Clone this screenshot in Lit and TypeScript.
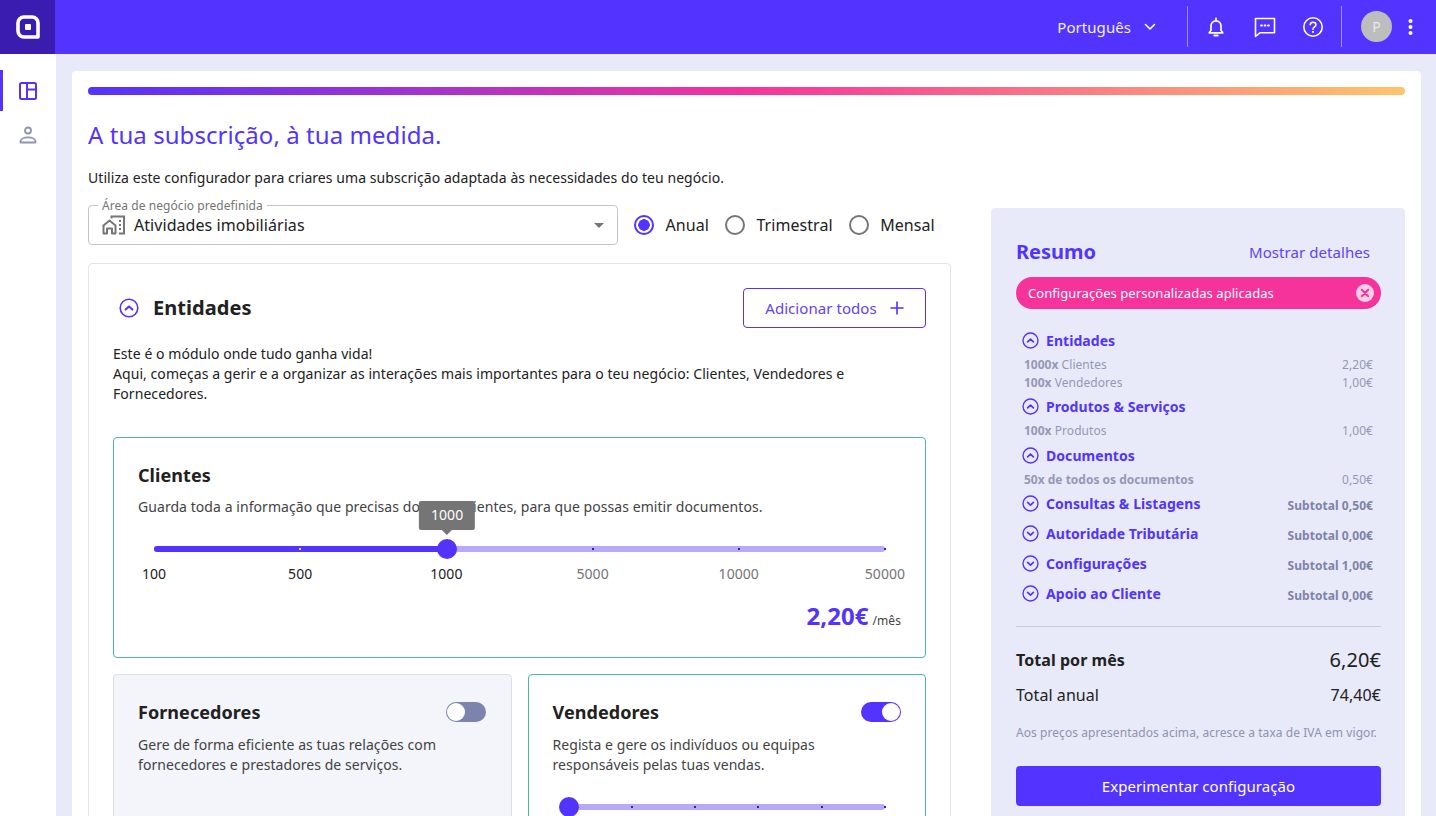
import { LitElement, html, css, svg } from "lit";
import { customElement } from "lit/decorators.js";

const chevronCircle = (up: boolean, size = 20) => html`<svg class="chev" width=${size} height=${size} viewBox="0 0 20 20" fill="none" stroke="currentColor">
  <circle cx="10" cy="10" r="8.8" stroke-width="1.6"></circle>
  ${up
    ? svg`<path d="M6.6 11.6 10 8.4l3.4 3.2" stroke-width="2" stroke-linecap="round" stroke-linejoin="round"></path>`
    : svg`<path d="M6.6 8.6 10 11.8l3.4-3.2" stroke-width="2" stroke-linecap="round" stroke-linejoin="round"></path>`}
</svg>`;

interface SummaryLine {
  qty: string;
  label: string;
  price: string;
}

interface SummaryGroup {
  name: string;
  open: boolean;
  subtotal?: string;
  lines?: SummaryLine[];
}

const groups: SummaryGroup[] = [
  {
    name: "Entidades",
    open: true,
    lines: [
      { qty: "1000x", label: " Clientes", price: "2,20€" },
      { qty: "100x", label: " Vendedores", price: "1,00€" },
    ],
  },
  {
    name: "Produtos & Serviços",
    open: true,
    lines: [{ qty: "100x", label: " Produtos", price: "1,00€" }],
  },
  {
    name: "Documentos",
    open: true,
    lines: [{ qty: "50x de todos os documentos", label: "", price: "0,50€" }],
  },
  { name: "Consultas & Listagens", open: false, subtotal: "Subtotal 0,50€" },
  { name: "Autoridade Tributária", open: false, subtotal: "Subtotal 0,00€" },
  { name: "Configurações", open: false, subtotal: "Subtotal 1,00€" },
  { name: "Apoio ao Cliente", open: false, subtotal: "Subtotal 0,00€" },
];

@customElement("app-root")
export class AppRoot extends LitElement {
  static styles = css`
    :host {
      display: block;
      height: 816px;
      overflow: hidden;
      background: #e8eaf9;
      font-family: "Noto Sans", sans-serif;
      letter-spacing: 0.06px;
      color: #212121;
    }
    * {
      box-sizing: border-box;
    }
    .topbar {
      height: 54px;
      background: #5233ff;
      display: flex;
      align-items: center;
      color: #fff;
    }
    .logo {
      width: 55px;
      height: 54px;
      background: #3a1db0;
      display: flex;
      align-items: center;
      justify-content: center;
    }
    .top-right {
      margin-left: auto;
      display: flex;
      align-items: center;
      height: 100%;
      padding-bottom: 1px;
    }
    .lang {
      font-size: 15px;
      display: flex;
      align-items: center;
      gap: 13px;
      margin-right: 31px;
      color: #f1efff;
    }
    .sep {
      width: 1px;
      height: 41px;
      background: rgba(255, 255, 255, 0.45);
    }
    .icons {
      display: flex;
      align-items: center;
      gap: 24.5px;
      padding: 0 17px;
    }
    .avatar {
      width: 31px;
      height: 31px;
      border-radius: 50%;
      background: #bdbdbd;
      color: #e8e8e8;
      font-size: 14px;
      display: flex;
      align-items: center;
      justify-content: center;
      margin-left: 19px;
    }
    .dots {
      margin: 0 23px 0 16px;
      display: flex;
    }
    .body {
      display: flex;
      height: 762px;
    }
    .side {
      width: 56px;
      background: #fff;
      padding-top: 16px;
      display: flex;
      flex-direction: column;
      flex: none;
    }
    .side-item {
      height: 41px;
      display: flex;
      align-items: center;
      justify-content: center;
      border-left: 3px solid transparent;
      padding-right: 4px;
    }
    .side-item.active {
      border-left-color: #5233ff;
    }
    .side-item + .side-item {
      height: 48px;
    }
    .main {
      flex: 1;
      padding: 17px 15px 0 16px;
      min-width: 0;
    }
    .card {
      background: #fff;
      border-radius: 4px 4px 0 0;
      padding: 16px;
      height: 800px;
    }
    .gradient {
      height: 8px;
      border-radius: 4px;
      background: linear-gradient(90deg, #5233ff 0%, #f5339b 50%, #ffc46b 100%);
    }
    h1 {
      margin: 24px 0 0;
      font-size: 24px;
      line-height: 32px;
      font-weight: 400;
      color: #5233ff;
    }
    .intro {
      margin: 17px 0 0;
      font-size: 14px;
      line-height: 20px;
    }
    .columns {
      display: grid;
      grid-template-columns: 863px 414px;
      gap: 40px;
      margin-top: 17px;
      align-items: start;
    }
    .controls {
      display: flex;
      align-items: center;
    }
    .select {
      position: relative;
      width: 530px;
      height: 40px;
      border: 1px solid #c4c4c4;
      border-radius: 4px;
      display: flex;
      align-items: center;
      padding: 0 14px;
      font-size: 16px;
      gap: 8px;
    }
    .legend {
      position: absolute;
      top: -8px;
      left: 9px;
      background: #fff;
      padding: 0 4px;
      font-size: 12px;
      line-height: 16px;
      color: #757575;
    }
    .arrow {
      margin-left: auto;
      width: 0;
      height: 0;
      margin-right: -1px;
      border-left: 5px solid transparent;
      border-right: 5px solid transparent;
      border-top: 5px solid #757575;
    }
    .radios {
      display: flex;
      align-items: center;
      margin-left: 16px;
      font-size: 16px;
      gap: 16px;
    }
    .radio {
      display: flex;
      align-items: center;
      gap: 11.5px;
    }
    .dot {
      width: 20px;
      height: 20px;
      border-radius: 50%;
      border: 2px solid #757575;
      flex: none;
    }
    .dot.on {
      border-color: #5233ff;
      background: radial-gradient(circle, #5233ff 0 5.5px, transparent 6px);
    }
    .module {
      margin-top: 18px;
      border: 1px solid #e4e5ec;
      border-radius: 4px;
      padding: 24px;
    }
    .mod-head {
      display: flex;
      align-items: center;
      height: 40px;
    }
    .mod-head .chev {
      color: #5233ff;
      margin-left: 6px;
    }
    .mod-head h2 {
      margin: 0 0 0 14px;
      padding-bottom: 2px;
      font-size: 20px;
      font-weight: 700;
    }
    .add {
      margin-left: auto;
      width: 183px;
      height: 40px;
      border: 1px solid #5233ff;
      border-radius: 4px;
      color: #5f43f5;
      font-size: 15px;
      display: flex;
      align-items: center;
      justify-content: center;
      gap: 13px;
    }
    .mod-text {
      margin: 16px 0 0;
      font-size: 14px;
      line-height: 20px;
    }
    .pick {
      margin-top: 33px;
      border: 1px solid #4db89c;
      border-radius: 4px;
      padding: 23px 24px 24px;
    }
    .pick h3 {
      margin: 0;
      font-size: 18px;
      line-height: 28px;
      font-weight: 700;
    }
    .pick p {
      margin: 8px 0 0;
      font-size: 14px;
      line-height: 20px;
      color: #424242;
    }
    .slider {
      position: relative;
      height: 6px;
      margin: 29px 16px 0;
      border-radius: 3px;
      background: #b9a9fb;
    }
    .fill {
      position: absolute;
      left: 0;
      top: 0;
      bottom: 0;
      border-radius: 3px;
      background: #5233ff;
    }
    .tick {
      position: absolute;
      top: 2px;
      width: 2px;
      height: 2px;
      margin-left: -1px;
      background: #3a1db0;
    }
    .tick.in {
      background: #dcd6ff;
    }
    .thumb {
      position: absolute;
      top: -7px;
      width: 20px;
      height: 20px;
      margin-left: -10px;
      border-radius: 50%;
      background: #5233ff;
    }
    .tip {
      position: absolute;
      top: -38px;
      left: 50%;
      transform: translateX(-50%);
      background: #757575;
      color: #fff;
      font-size: 14px;
      line-height: 20px;
      padding: 4px 12px;
      border-radius: 2px;
      height: 29px;
    }
    .tip::after {
      content: "";
      position: absolute;
      left: 50%;
      margin-left: -5px;
      bottom: -5px;
      border-left: 5px solid transparent;
      border-right: 5px solid transparent;
      border-top: 5px solid #757575;
    }
    .marks {
      display: flex;
      justify-content: space-between;
      margin: 12px 16px 0;
      font-size: 14px;
      line-height: 20px;
      color: #757575;
    }
    .marks span {
      width: 0;
      display: flex;
      justify-content: center;
      white-space: nowrap;
    }
    .marks .reached {
      color: #212121;
    }
    .price {
      margin: 16px 0 -4px;
      display: flex;
      justify-content: flex-end;
      align-items: baseline;
      gap: 4px;
      color: #5233ff;
      font-size: 24px;
      line-height: 32px;
      font-weight: 700;
    }
    .price small {
      font-size: 12px;
      font-weight: 400;
      color: #424242;
    }
    .pair {
      display: grid;
      grid-template-columns: 398.5px 398.5px;
      gap: 16px;
      margin-top: 16px;
    }
    .pair .pick {
      margin-top: 0;
      height: 300px;
    }
    .pair .pick p {
      margin-top: 9px;
    }
    .pair .off {
      background: #f3f5fa;
      border-color: #dcdfe8;
      padding-right: 25px;
    }
    .pick-head {
      display: flex;
      align-items: center;
      justify-content: space-between;
    }
    .toggle {
      width: 40px;
      height: 20px;
      border-radius: 10px;
      background: #7c83ad;
      position: relative;
      flex: none;
    }
    .toggle.on {
      background: #5233ff;
    }
    .toggle i {
      position: absolute;
      top: 1px;
      left: 1px;
      width: 18px;
      height: 18px;
      border-radius: 50%;
      background: #fff;
    }
    .toggle.on i {
      left: 21px;
    }
    .pair .slider {
      margin-top: 29px;
    }
    .summary {
      margin-top: 3px;
      background: #e8eaf9;
      border-radius: 4px;
      padding: 24px 24px 24px 25px;
      height: 700px;
    }
    .sum-head {
      display: flex;
      justify-content: space-between;
      align-items: center;
      height: 40px;
      color: #5233ff;
      padding-right: 11px;
    }
    .sum-head b {
      font-size: 20px;
      font-weight: 700;
      letter-spacing: 0;
      margin-top: -2px;
    }
    .sum-head span {
      font-size: 15px;
      color: #5f43f5;
    }
    .pill {
      margin-top: 5px;
      height: 32px;
      border-radius: 16px;
      background: #f5339b;
      color: #fff;
      font-size: 13px;
      display: flex;
      align-items: center;
      justify-content: space-between;
      padding: 0 7px 0 12px;
    }
    .groups {
      margin-top: 21px;
      padding: 0 8px 0 6px;
    }
    .group {
      display: flex;
      align-items: center;
      height: 20px;
      color: #5233ff;
      gap: 7px;
      font-size: 14px;
      font-weight: 700;
    }
    .group.closed {
      height: 30px;
    }
    .lines + .group.closed {
      margin-top: -5px;
    }
    .group .sub {
      margin-left: auto;
      font-size: 12px;
      padding-top: 4px;
      color: #7f83a8;
      font-weight: 700;
    }
    .line {
      display: flex;
      justify-content: space-between;
      font-size: 12px;
      line-height: 18px;
      color: #9598b4;
      padding-left: 2px;
    }
    .line b {
      font-weight: 700;
      letter-spacing: 0;
    }
    .lines {
      padding: 5.5px 0 5px;
    }
    hr {
      border: none;
      height: 1px;
      background: #c9cbdb;
      margin: 17px 0 0;
    }
    .total {
      display: flex;
      justify-content: space-between;
      align-items: center;
      margin-top: 17px;
      height: 32px;
      font-size: 16px;
    }
    .total b {
      font-weight: 700;
    }
    .total .big {
      font-size: 20px;
    }
    .total + .total {
      margin-top: 3px;
    }
    .note {
      margin: 14px 0 0;
      font-size: 12px;
      line-height: 16px;
      color: #8f93ad;
      white-space: nowrap;
    }
    .try {
      margin-top: 25px;
      height: 40px;
      background: #5233ff;
      border-radius: 4px;
      color: #fff;
      font-size: 15px;
      display: flex;
      align-items: center;
      justify-content: center;
    }
  `;

  slider(pct: number, ticks: number[], tip?: string) {
    return html`<div class="slider">
      <div class="fill" style="width:${pct}%"></div>
      ${ticks.map(
        (t) => html`<div class="tick ${t < pct ? "in" : ""}" style="left:${t}%"></div>`
      )}
      <div class="thumb" style="left:${pct}%">
        ${tip ? html`<div class="tip">${tip}</div>` : ""}
      </div>
    </div>`;
  }

  renderTop() {
    return html`<header class="topbar">
      <div class="logo">
        <svg width="24" height="24" viewBox="0 0 24 24" fill="none">
          <path d="M8 2h8a6 6 0 0 1 6 6v14H8a6 6 0 0 1-6-6V8a6 6 0 0 1 6-6Z" stroke="#fff" stroke-width="3.6" stroke-linejoin="round"></path>
          <rect x="9" y="9" width="6" height="6" rx="1" fill="#fff"></rect>
        </svg>
      </div>
      <div class="top-right">
        <div class="lang">
          Português
          <svg width="12" height="8" viewBox="0 0 12 8" fill="none" stroke="#fff" stroke-width="1.6" stroke-linecap="round" stroke-linejoin="round"><path d="m1.5 1.5 4.5 4.5 4.5-4.5"></path></svg>
        </div>
        <div class="sep"></div>
        <div class="icons">
          <svg width="22" height="22" viewBox="0 0 22 22" fill="none" stroke="#fff" stroke-width="1.7" stroke-linejoin="round"><path d="M4.2 16.8h13.6l-1.8-2.6V9.8a5 5 0 0 0-10 0v4.4Z"></path><path d="M9.3 19.6h3.4" stroke-linecap="round" stroke-width="2"></path><path d="M11 2.4v2" stroke-linecap="round"></path></svg>
          <svg width="26" height="24" viewBox="0 0 26 24" fill="none" stroke="#fff" stroke-width="1.6" stroke-linejoin="round"><path d="M3.5 3.5h19v14.2H8.2L3.5 21.5Z"></path><path d="M9 10.5h1M12.5 10.5h1M16 10.5h1" stroke-width="1.8" stroke-linecap="round"></path></svg>
          <svg width="22" height="22" viewBox="0 0 22 22" fill="none" stroke="#fff" stroke-width="1.6" stroke-linecap="round"><circle cx="11" cy="11" r="9.2"></circle><path d="M8.2 8.7A2.8 2.8 0 0 1 11 6.2c1.6 0 2.9 1.1 2.9 2.5 0 2.2-2.9 2.3-2.9 4.5"></path><path d="M11 15.8v.1" stroke-width="2"></path></svg>
        </div>
        <div class="sep"></div>
        <div class="avatar">P</div>
        <div class="dots">
          <svg width="5" height="16" viewBox="0 0 5 16" fill="#fff"><circle cx="2.5" cy="2" r="2"></circle><circle cx="2.5" cy="8" r="2"></circle><circle cx="2.5" cy="14" r="2"></circle></svg>
        </div>
      </div>
    </header>`;
  }

  renderSummary() {
    return html`<aside class="summary">
      <div class="sum-head"><b>Resumo</b><span>Mostrar detalhes</span></div>
      <div class="pill">
        Configurações personalizadas aplicadas
        <svg width="18" height="18" viewBox="0 0 18 18"><circle cx="9" cy="9" r="9" fill="#fbd0e6"></circle><path d="m5.8 5.8 6.4 6.4m0-6.4-6.4 6.4" stroke="#f5339b" stroke-width="2" stroke-linecap="round"></path></svg>
      </div>
      <div class="groups">
        ${groups.map(
          (g) => html`<div class="group ${g.open ? "" : "closed"}">
              ${chevronCircle(g.open, 17)}
              <span>${g.name}</span>
              ${g.subtotal ? html`<span class="sub">${g.subtotal}</span>` : ""}
            </div>
            ${g.lines
              ? html`<div class="lines">
                  ${g.lines.map(
                    (l) => html`<div class="line">
                      <span><b>${l.qty}</b>${l.label}</span><span>${l.price}</span>
                    </div>`
                  )}
                </div>`
              : ""}`
        )}
      </div>
      <hr />
      <div class="total"><b>Total por mês</b><span class="big">6,20€</span></div>
      <div class="total"><span>Total anual</span><span>74,40€</span></div>
      <p class="note">Aos preços apresentados acima, acresce a taxa de IVA em vigor.</p>
      <div class="try">Experimentar configuração</div>
    </aside>`;
  }

  render() {
    const marks = ["100", "500", "1000", "5000", "10000", "50000"];
    return html`
      ${this.renderTop()}
      <div class="body">
        <nav class="side">
          <div class="side-item active">
            <svg width="22" height="22" viewBox="0 0 22 22" fill="none" stroke="#5233ff" stroke-width="2"><rect x="3" y="3" width="16" height="16" rx="1.5"></rect><path d="M10 3v16M10 9.5h9"></path></svg>
          </div>
          <div class="side-item">
            <svg width="22" height="22" viewBox="0 0 22 22" fill="none" stroke="#8f93ad" stroke-width="1.8"><circle cx="11" cy="6.5" r="3"></circle><path d="M3.5 18.5v-1c0-2.6 3.6-4.2 7.5-4.2s7.5 1.6 7.5 4.2v1Z" stroke-linejoin="round"></path></svg>
          </div>
        </nav>
        <main class="main">
          <div class="card">
            <div class="gradient"></div>
            <h1>A tua subscrição, à tua medida.</h1>
            <p class="intro">Utiliza este configurador para criares uma subscrição adaptada às necessidades do teu negócio.</p>
            <div class="columns">
              <section>
                <div class="controls">
                  <div class="select">
                    <span class="legend">Área de negócio predefinida</span>
                    <svg width="24" height="20" viewBox="0 0 24 20" fill="none" stroke="#757575" stroke-width="2" style="margin-left:-1px"><path d="M1.5 18.5v-8l6-5 6 5v8h-3.5v-5h-5v5Z" stroke-linejoin="round"></path><path d="M9.5 3.5V1.5h12.5v17h-5"></path><path d="M17 6h2M17 10h2M17 14h2" stroke-width="2"></path></svg>
                    Atividades imobiliárias
                    <span class="arrow"></span>
                  </div>
                  <div class="radios">
                    <label class="radio"><span class="dot on"></span>Anual</label>
                    <label class="radio"><span class="dot"></span>Trimestral</label>
                    <label class="radio"><span class="dot"></span>Mensal</label>
                  </div>
                </div>
                <div class="module">
                  <div class="mod-head">
                    ${chevronCircle(true)}
                    <h2>Entidades</h2>
                    <div class="add">
                      Adicionar todos
                      <svg width="14" height="14" viewBox="0 0 14 14" stroke="#5233ff" stroke-width="1.6" stroke-linecap="round"><path d="M7 1v12M1 7h12"></path></svg>
                    </div>
                  </div>
                  <p class="mod-text">
                    Este é o módulo onde tudo ganha vida!<br />
                    Aqui, começas a gerir e a organizar as interações mais importantes para o teu negócio: Clientes, Vendedores e Fornecedores.
                  </p>
                  <div class="pick">
                    <h3>Clientes</h3>
                    <p>Guarda toda a informação que precisas dos teus clientes, para que possas emitir documentos.</p>
                    ${this.slider(40.1, [20, 60, 80, 100], "1000")}
                    <div class="marks">
                      ${marks.map(
                        (m, i) => html`<span class="${i < 3 ? "reached" : ""}">${m}</span>`
                      )}
                    </div>
                    <div class="price">2,20€ <small>/mês</small></div>
                  </div>
                  <div class="pair">
                    <div class="pick off">
                      <div class="pick-head">
                        <h3>Fornecedores</h3>
                        <div class="toggle"><i></i></div>
                      </div>
                      <p>Gere de forma eficiente as tuas relações com fornecedores e prestadores de serviços.</p>
                    </div>
                    <div class="pick">
                      <div class="pick-head">
                        <h3>Vendedores</h3>
                        <div class="toggle on"><i></i></div>
                      </div>
                      <p>Regista e gere os indivíduos ou equipas responsáveis pelas tuas vendas.</p>
                      ${this.slider(0, [20, 40, 60, 80, 100])}
                    </div>
                  </div>
                </div>
              </section>
              ${this.renderSummary()}
            </div>
          </div>
        </main>
      </div>
    `;
  }
}
